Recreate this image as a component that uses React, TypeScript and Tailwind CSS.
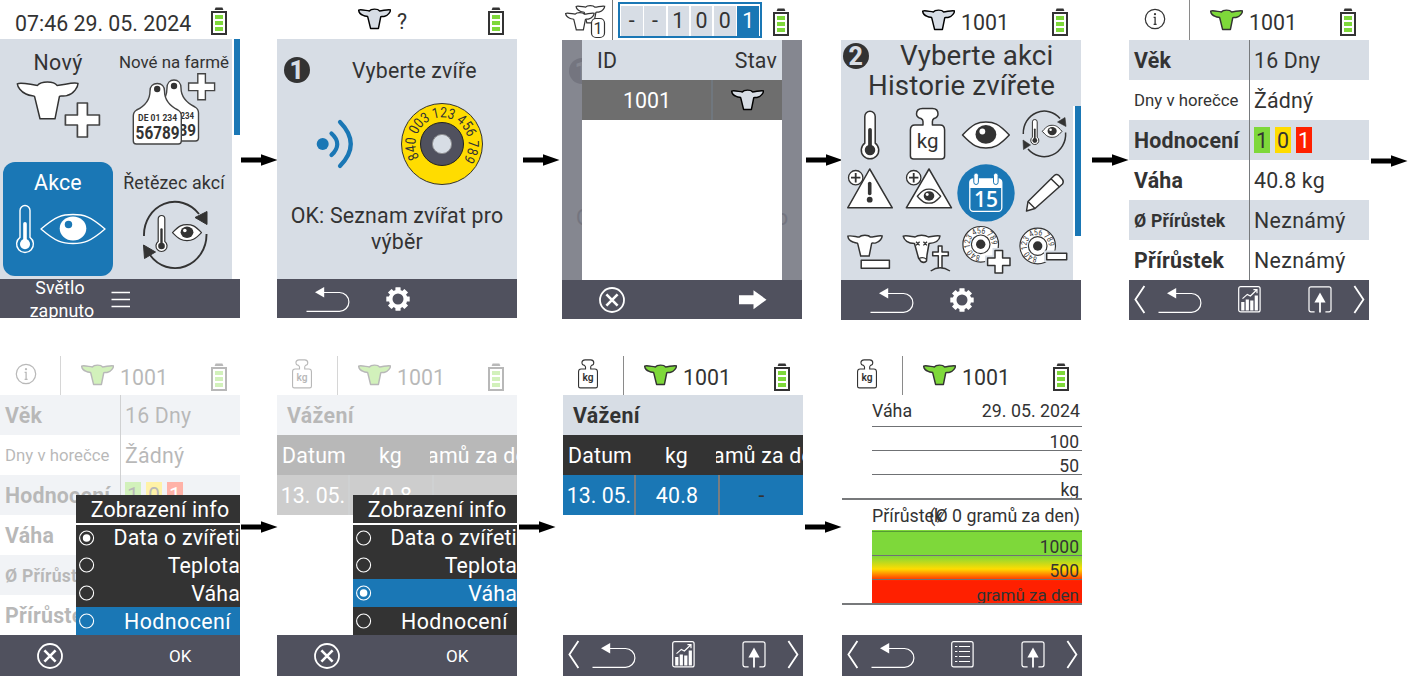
import React from 'react';

const INK = '#333333';
const SHADE = '#d7dde5';
const BLUE = '#1a77b5';
const GREEN = '#7ed83a';

/* ---------- shapes ---------- */

const COW_PATH =
  'M.3 3C4 .9 14 4 20.5 4.6C24 0 37 0 40 4.6C47 4.2 56 1 61 2.6C61 6 57 13 50 14.8C46 16 43 14.4 42.4 15.8L38 38H23L17.6 15.8C17 14.2 14 15.8 9 13.2C4 11 .5 6 .3 3Z';

function plusPath(x: number, y: number, s: number, t: number) {
  const a = (s - t) / 2;
  return `M${x + a} ${y}h${t}v${a}h${a}v${t}h${-a}v${a}h${-t}v${-a}h${-a}v${-t}h${a}z`;
}

function Cow({ fill = SHADE, stroke = INK }: { fill?: string; stroke?: string }) {
  return (
    <svg width="33" height="22" viewBox="-1 -1 63 42" className="block shrink-0">
      <path d={COW_PATH} fill={fill} stroke={stroke} strokeWidth="2.8" strokeLinejoin="round" />
    </svg>
  );
}

function Battery() {
  return (
    <svg width="16" height="28" viewBox="0 0 16 28" className="block shrink-0">
      <path d="M3.6 3L4.6 .4h6.800l1 2.600z" fill={INK} />
      <rect x="1" y="5" width="14" height="22" fill="#fff" stroke={INK} strokeWidth="2" />
      <path d="M4 8h8v4H4zM4 14h8v4H4zM4 20h8v4H4z" fill={GREEN} />
    </svg>
  );
}

function InfoIcon() {
  return (
    <svg width="22" height="22" viewBox="0 0 22 22" className="block">
      <circle cx="11" cy="11" r="9.7" fill="none" stroke={INK} strokeWidth="1.2" />
      <circle cx="11" cy="6.2" r="1.1" fill={INK} />
      <path d="M9.600 9.300h1.500v7M9.600 16.300h3" fill="none" stroke={INK} strokeWidth="1.300" />
    </svg>
  );
}

const WEIGHT_PATH =
  'M24 19V15.5Q24 13.5 22 12.5Q17.5 11.3 17.5 8Q17.5 2.5 23.5 2.5H33.5Q39 2.5 39 8Q39 11.3 35 12.5Q33.4 13.5 33.4 15.5V19H41Q45.6 19 45.6 24V50Q45.6 53 42.4 53H14.6Q11.4 53 11.4 50V24Q11.4 19 16 19Z';

function WeightSmall() {
  return (
    <svg width="20" height="30" viewBox="10.4 1 36.2 54" preserveAspectRatio="none" className="block">
      <path d={WEIGHT_PATH} fill="#fff" stroke={INK} strokeWidth="2" />
      <text x="28.7" y="41" textAnchor="middle" fontSize="18.5" fontWeight="600" letterSpacing="0" fill={INK}>
        kg
      </text>
    </svg>
  );
}

function BadgeNumber({ n, color = INK, hole = SHADE }: { n: string; color?: string; hole?: string }) {
  return (
    <svg width="26" height="26" viewBox="0 0 26 26" className="block shrink-0">
      <circle cx="13" cy="13" r="13" fill={color} />
      <text x="12.8" y="22" textAnchor="middle" fontWeight="800" fontSize="25" letterSpacing="0" fill={hole}>
        {n}
      </text>
    </svg>
  );
}

function Thermo({ x, y, h, w, line, fill, sw }: { x: number; y: number; h: number; w: number; line: string; fill: string; sw: number }) {
  const r = w * 0.84;
  const cy = y + h - r;
  const cx = x;
  const half = w / 2;
  const jy = cy - Math.sqrt(r * r - half * half);
  return (
    <g>
      <path
        d={`M${cx - half} ${jy}V${y + half}a${half} ${half} 0 0 1 ${w} 0V${jy}A${r} ${r} 0 1 1 ${cx - half} ${jy}Z`}
        fill={fill}
        stroke={line}
        strokeWidth={sw}
      />
      <circle cx={cx} cy={cy} r={r * 0.6} fill={line} />
      <path d={`M${cx} ${y + h * 0.39}V${cy}`} stroke={line} strokeWidth={w * 0.36} strokeLinecap="round" />
    </g>
  );
}

function Eye({ x1, x2, cy, h, r, line, fill, shine, sw }: { x1: number; x2: number; cy: number; h: number; r: number; line: string; fill: string; shine: string; sw: number }) {
  const cx = (x1 + x2) / 2;
  const q = (x2 - x1) / 4.2;
  return (
    <g>
      <path
        d={`M${x1} ${cy}C${x1 + q} ${cy - h * 0.45} ${cx - q * 0.7} ${cy - h / 2} ${cx} ${cy - h / 2}S${x2 - q} ${cy - h * 0.45} ${x2} ${cy}C${x2 - q} ${cy + h * 0.45} ${cx + q * 0.7} ${cy + h / 2} ${cx} ${cy + h / 2}S${x1 + q} ${cy + h * 0.45} ${x1} ${cy}Z`}
        fill={fill}
        stroke={line}
        strokeWidth={sw}
        strokeLinejoin="round"
      />
      <ellipse cx={cx} cy={cy - h * 0.02} rx={r} ry={r * 0.9} fill={line} />
      <circle cx={cx - r * 0.34} cy={cy - r * 0.34} r={r * 0.28} fill={shine} />
    </g>
  );
}

function RingText({ id, cx, cy, r, size, length, from, children }: { id: string; cx: number; cy: number; r: number; size: number; length: number; from: number; children: string }) {
  const a = (from * Math.PI) / 180;
  const sx = cx + r * Math.cos(a);
  const sy = cy + r * Math.sin(a);
  return (
    <>
      <path id={id} fill="none" d={`M${sx} ${sy}A${r} ${r} 0 0 1 ${2 * cx - sx} ${2 * cy - sy}A${r} ${r} 0 0 1 ${sx} ${sy}`} />
      <text fontSize={size} fill={INK} letterSpacing="0" textLength={length} lengthAdjust="spacingAndGlyphs">
        <textPath href={`#${id}`} textLength={length} lengthAdjust="spacingAndGlyphs">
          {children}
        </textPath>
      </text>
    </>
  );
}

/* ---------- footer icons ---------- */

function BackIcon() {
  return (
    <svg width="44" height="26" viewBox="0 0 44 26" className="block shrink-0">
      <path d="M16 5.500H33.500a9.300 9.300 0 0 1 0 18.800H.5" fill="none" stroke="#fff" strokeWidth="1.200" />
      <path d="M9 5.200L18.200 0V10.600z" fill="#fff" />
    </svg>
  );
}

function GearIcon() {
  return (
    <svg width="24" height="24" viewBox="-12 -12 24 24" className="block shrink-0">
      <circle r="7.400" fill="none" stroke="#fff" strokeWidth="3.800" />
      {[0, 45, 90, 135, 180, 225, 270, 315].map((a) => (
        <rect key={a} x="-2.600" y="-11.700" width="5.200" height="4.600" rx=".4" fill="#fff" transform={`rotate(${a})`} />
      ))}
    </svg>
  );
}

function CancelIcon() {
  return (
    <svg width="26" height="26" viewBox="-13 -13 26 26" className="block shrink-0">
      <circle r="12" fill="none" stroke="#fff" strokeWidth="1.800" />
      <path d="M-5.600-5.600L5.600 5.600M5.600-5.600L-5.600 5.600" stroke="#fff" strokeWidth="2.600" />
    </svg>
  );
}

function ChartIcon() {
  return (
    <svg width="23" height="27" viewBox="0 0 23 27" className="block shrink-0">
      <rect x=".7" y=".7" width="21.400" height="25.200" rx="2" fill="none" stroke="#fff" strokeWidth="1.200" />
      <path d="M3.200 16h3.200v8.400h-3.200zM7.700 13.600h3.200V24.400h-3.200zM12.200 14.600h3.200V24.400h-3.200zM16.700 9.600h3.200V24.400h-3.200z" fill="#fff" />
      <path d="M4.500 12.600L9.300 8.400L12.400 10L18.600 4M15.400 3.600H19V7.200" fill="none" stroke="#fff" strokeWidth="1.200" />
    </svg>
  );
}

function ListIcon() {
  return (
    <svg width="23" height="27" viewBox="0 0 23 27" className="block shrink-0">
      <rect x=".7" y=".7" width="21.400" height="25.200" rx="2" fill="none" stroke="#fff" strokeWidth="1.200" />
      {[5.5, 10.5, 15.5, 20.5].map((y) => (
        <path key={y} d={`M4 ${y}h2.400M8 ${y}h11`} stroke="#fff" strokeWidth="1.100" />
      ))}
    </svg>
  );
}

function ExportIcon() {
  return (
    <svg width="24" height="27" viewBox="0 0 24 27" className="block shrink-0">
      <path d="M6.600 25.800H3Q1 25.800 1 23.800V2.700Q1 .8 3 .8H21Q23 .8 23 2.700V23.800Q23 25.800 21 25.800H17.400" fill="none" stroke="#fff" strokeWidth="1.200" />
      <path d="M12 6.600L17.600 16.600H6.400z" fill="#fff" />
      <path d="M12 15V26.400" stroke="#fff" strokeWidth="1.800" />
    </svg>
  );
}

function Chevron({ right = false }: { right?: boolean }) {
  return (
    <svg width="12" height="29" viewBox="0 0 12 29" className="block shrink-0">
      <path d={right ? 'M1.400 1L10.400 14.500L1.400 28' : 'M10.400 1L1.400 14.500L10.400 28'} fill="none" stroke="#fff" strokeWidth="1.800" />
    </svg>
  );
}

/* ---------- layout parts ---------- */

function Arrow({ width, pad, top }: { width: string; pad: string; top: string }) {
  return (
    <div className={`shrink-0 ${width} ${pad} ${top}`}>
      <svg width="37" height="12" viewBox="0 0 37 12" className="block">
        <path d="M0 3.500H20V.2L36.500 6L20 11.800V8.500H0Z" fill="#000" />
      </svg>
    </div>
  );
}

function Header({ tall = false, icon, fill, label }: { tall?: boolean; icon?: React.ReactNode; fill: string; label: string }) {
  return (
    <div className={`flex items-start ${tall ? 'h-10 pt-px' : 'h-[39px]'}`}>
      <div className={`flex w-[61px] justify-center pr-[9px] ${tall ? '-mt-px h-10 pt-px' : 'h-[39px]'} ${icon ? 'border-r border-[#8a8a8a]' : ''}`}>{icon}</div>
      <div className="ml-5 pt-2">
        <Cow fill={fill} stroke={fill === SHADE ? '#000' : INK} />
      </div>
      <div className="ml-1.5 pt-px leading-[42px] tracking-normal">{label}</div>
      <div className="ml-auto mr-[13px] pt-[7px]">
        <Battery />
      </div>
    </div>
  );
}

const FOOT = 'flex items-start bg-[#50515e] text-white overflow-hidden';

function NavFooter({ middle, tall = false }: { middle: React.ReactNode; tall?: boolean }) {
  return (
    <div className={`${FOOT} ${tall ? 'h-[41px]' : 'h-10'}`}>
      <div className="pl-[5px] pt-[5px]"><Chevron /></div>
      <div className="pl-3 pt-2"><BackIcon /></div>
      <div className="pl-9 pt-1.5">{middle}</div>
      <div className="pl-[47px] pt-1.5"><ExportIcon /></div>
      <div className="pl-[21px] pt-[5px]"><Chevron right /></div>
    </div>
  );
}

function BackGearFooter({ height }: { height: string }) {
  return (
    <div className={`${FOOT} ${height}`}>
      <div className="pl-[29px] pt-2"><BackIcon /></div>
      <div className="pl-[36px] pt-2"><GearIcon /></div>
    </div>
  );
}

function InfoTable() {
  const row = 'flex h-10 items-start leading-[42px]';
  const label = 'w-[121px] h-10 pl-[5px] border-r border-[#777a7d] font-bold whitespace-nowrap';
  const val = 'pl-1';
  return (
    <div className="h-60">
      <div className={`${row} bg-[#d7dde5]`}><div className={label}>Věk</div><div className={val}>16 Dny</div></div>
      <div className={row}><div className="h-10 w-[121px] whitespace-nowrap border-r border-[#777a7d] pl-[5px] text-[16.8px] leading-[41px] tracking-normal">Dny v horečce</div><div className={val}>Žádný</div></div>
      <div className={`${row} bg-[#d7dde5]`}>
        <div className={label}>Hodnocení</div>
        <div className="flex gap-[5px] pl-1 pt-[7px] text-center leading-[27px]">
          <span className="h-[26px] w-4 bg-[#7ed83a]">1</span>
          <span className="h-[26px] w-4 bg-[#ffdc00]">0</span>
          <span className="h-[26px] w-4 bg-[#ff2000] text-white">1</span>
        </div>
      </div>
      <div className={row}><div className={label}>Váha</div><div className={val}>40.8 kg</div></div>
      <div className={`${row} bg-[#d7dde5]`}><div className="h-10 w-[121px] whitespace-nowrap border-r border-[#777a7d] pl-[5px] text-[17.6px] font-bold">Ø Přírůstek</div><div className={`${val} tracking-[.35px]`}>Neznámý</div></div>
      <div className={row}><div className={label}>Přírůstek</div><div className={`${val} tracking-[.35px]`}>Neznámý</div></div>
    </div>
  );
}

function WeighTable({ selected }: { selected: boolean }) {
  const cell = 'flex h-10 items-start justify-center overflow-hidden whitespace-nowrap leading-[42px]';
  const line = selected ? 'border-r-2 border-[#7a7d80]' : 'border-r-2 border-[#757a7d]';
  return (
    <div className="h-60">
      <div className="h-10 bg-[#d7dde5] pl-[10px] font-bold leading-[42px] tracking-[.35px]">Vážení</div>
      <div className="flex bg-[#333333] text-white">
        <div className={`${cell} w-[74px]`}>Datum</div>
        <div className={`${cell} w-[79px]`}>kg</div>
        <div className={`${cell} w-[87px]`}><span className="shrink-0">gramů za den</span></div>
      </div>
      <div className={`flex text-white ${selected ? 'bg-[#1a77b5]' : 'bg-[#6e6e6e]'}`}>
        <div className={`${cell} w-[73px] pl-px tracking-normal ${line}`}>13. 05.</div>
        <div className={`${cell} w-[84px] ${line}`}>40.8</div>
        <div className={`${cell} w-[83px] text-[#333333]`}>{selected ? '-' : ''}</div>
      </div>
    </div>
  );
}

function Menu({ checked, active }: { checked: string; active: string }) {
  return (
    <div className="absolute bottom-[41px] right-0 w-[164px] overflow-hidden bg-[#333333] text-white">
      <div className="h-[30px] border-b-2 border-white pl-1 text-center leading-[29px]">Zobrazení info</div>
      {['Data o zvířeti', 'Teplota', 'Váha', 'Hodnocení'].map((name, i) => (
        <div
          key={name}
          className={`flex items-center justify-between whitespace-nowrap pl-[3px] ${i === 0 ? 'h-[26px] pb-px' : 'h-7'} ${name === active ? 'bg-[#1a77b5]' : ''} ${name === 'Hodnocení' ? 'pr-[9px] tracking-[.45px]' : ''}`}
        >
          <svg width="16" height="16" viewBox="0 0 16 16" className="block shrink-0">
            <circle cx="7.600" cy="8" r="7" fill="none" stroke="#fff" strokeWidth="1.100" />
            {name === checked && <circle cx="7.600" cy="8" r="3.800" fill="#fff" />}
          </svg>
          <span className={i === 0 ? '' : 'pt-px'}>{name}</span>
        </div>
      ))}
    </div>
  );
}

/* ---------- screens ---------- */

function HomeScreen() {
  return (
    <div className="w-60 shrink-0">
      <div className="flex h-[39px] items-start pl-[15px]">
        <div className="whitespace-nowrap leading-[47px] tracking-normal">07:46 29. 05. 2024</div>
        <div className="ml-auto mr-[13px] pt-[7px]"><Battery /></div>
      </div>
      <div className="flex h-60 justify-between">
        <div className="grid w-[232px] grid-cols-2 grid-rows-2 bg-[#d7dde5] text-center">
          <div className="pt-[11px]">
            <div className="leading-[26px] tracking-[.4px]">Nový</div>
            <svg width="116" height="68" viewBox="0 76 116 68" className="block">
              <path d={COW_PATH} transform="translate(17 80.8)" fill="#fff" stroke={INK} strokeWidth="1.500" strokeLinejoin="round" />
              <path d={plusPath(65.4, 103, 34, 10)} fill="#fff" stroke="#444" strokeWidth="1.700" strokeLinejoin="round" />
            </svg>
          </div>
          <div className="whitespace-nowrap pt-[11px]">
            <div className="text-[16.9px] leading-[25px] tracking-normal">Nové na farmě</div>
            <svg width="116" height="75" viewBox="116 72 116 75" className="-mt-[3px] block">
              <path d="M167 88C167 83 170 80 174 80S181 83 181 88C181 97 187 103 195 107Q198.500 109 198.500 113V138Q198.500 141 195.500 141H160V104C165 100 167 94 167 88Z" fill="#fff" stroke="#444" strokeWidth="1.400" />
              <circle cx="174" cy="86" r="3.200" fill={INK} />
              <text x="180.500" y="118.600" fontSize="9" fontWeight="700" letterSpacing="0" textLength="13.500" lengthAdjust="spacingAndGlyphs" fill={INK}>234</text>
              <text x="178.500" y="136" fontSize="17" fontWeight="700" letterSpacing="0" textLength="17.500" lengthAdjust="spacingAndGlyphs" fill={INK}>89</text>
              <path d="M150 91C150 86.500 153 83.500 157.300 83.500S164.500 86.500 164.500 91C164.500 100 170 106 178 110Q181.300 112 181.300 116V141Q181.300 144 178.300 144H136.300Q133.300 144 133.300 141V116Q133.300 112 136.600 110C145 106 150 100 150 91Z" fill="#fff" stroke="#444" strokeWidth="1.400" />
              <circle cx="157.200" cy="89" r="3.200" fill={INK} />
              <text x="157.600" y="121" fontSize="9.500" fontWeight="700" letterSpacing="0" textAnchor="middle" textLength="39" lengthAdjust="spacingAndGlyphs" fill={INK}>DE 01 234</text>
              <text x="157.600" y="138.700" fontSize="18" fontWeight="700" letterSpacing="0" textAnchor="middle" textLength="44" lengthAdjust="spacingAndGlyphs" fill={INK}>56789</text>
              <path d={plusPath(188.6, 73.8, 26, 7.6)} fill="#fff" stroke="#444" strokeWidth="1.400" />
            </svg>
          </div>
          <div className="m-[3px] rounded-xl bg-[#1a77b5] pt-2 text-white">
            <div className="leading-[26px]">Akce</div>
            <svg width="110" height="58" viewBox="3 200 110 58" className="mt-1 block">
              <Thermo x={25} y={205.500} h={47} w={10} line="#fff" fill={BLUE} sw={1.400} />
              <Eye x1={41} x2={105} cy={229} h={29} r={13.3} line="#fff" fill={BLUE} shine={BLUE} sw={1.400} />
            </svg>
          </div>
          <div className="whitespace-nowrap pt-[11px]">
            <div className="text-[17.8px] leading-[25px] tracking-[.15px]">Řetězec akcí</div>
            <svg width="116" height="76" viewBox="116 196 116 76" className="mt-0.5 block">
              <path d="M144 235A31 33 0 0 1 199 213M206.500 233A31.500 33.500 0 0 1 150 254" fill="none" stroke={INK} strokeWidth="1.900" />
              <path d="M207 223.500L195 216.500L207 210.500ZM143.500 244L155.500 251L144.500 257.500Z" fill={INK} stroke={INK} />
              <Thermo x={161.500} y={214.500} h={36} w={6.600} line={INK} fill="#fff" sw={1.200} />
              <Eye x1={172.500} x2={201.500} cy={231.600} h={16} r={6.400} line={INK} fill="#fff" shine="#fff" sw={1.200} />
            </svg>
          </div>
        </div>
        <div className="h-24 w-1.5 bg-[#1a77b5]" />
      </div>
      <div className={`${FOOT} h-[39px]`}>
        <div className="-mt-[3px] ml-[26px] w-[72px] text-center text-[17.8px] leading-[23px] tracking-[.1px]">
          <div className="pr-1">Světlo</div>
          <div>zapnuto</div>
        </div>
        <svg width="20" height="18" viewBox="0 0 20 18" className="ml-[13px] mt-3 block">
          <path d="M.5 1.500h18.500M.5 8.500h18.500M.5 15.500h18.500" stroke="#fff" strokeWidth="1.600" />
        </svg>
      </div>
    </div>
  );
}

function PickAnimalScreen() {
  return (
    <div className="w-60 shrink-0">
      <Header fill={SHADE} label="?" />
      <div className="h-60 bg-[#d7dde5] pt-[18px]">
        <div className="flex items-center pl-[7px]">
          <BadgeNumber n="1" />
          <div className="pl-[42px] leading-[25px] tracking-[.15px]">Vyberte zvíře</div>
        </div>
        <svg width="240" height="86" viewBox="277 101 240 86" className="mt-[18px] block">
          <circle cx="322.700" cy="144" r="6" fill={BLUE} />
          <path d="M331.500 133.500Q343 144 331.500 155" fill="none" stroke={BLUE} strokeWidth="4.200" strokeLinecap="round" />
          <path d="M340 122Q361.500 144 340 166" fill="none" stroke={BLUE} strokeWidth="4.200" strokeLinecap="round" />
          <circle cx="442" cy="144" r="40.500" fill="#ffdc00" stroke={INK} strokeWidth="1" />
          <circle cx="442" cy="144" r="21.500" fill="#50515e" stroke="#222" strokeWidth="1" />
          <circle cx="442" cy="144" r="9.600" fill={SHADE} stroke="#8b8c90" strokeWidth="1" />
          <RingText id="ring-large" cx={442} cy={144} r={26.5} size={14.5} length={114} from={149}>840 003 123 456 789</RingText>
        </svg>
        <div className="mt-4 text-center leading-[26px]">OK: Seznam zvířat pro výběr</div>
      </div>
      <BackGearFooter height="h-[39px]" />
    </div>
  );
}

function SearchScreen() {
  return (
    <div className="w-60 shrink-0">
      <div className="flex h-10 items-start">
        <div className="h-10 w-[51px] border-r border-[#777777] pl-[3px] pt-1">
          <svg width="42" height="35" viewBox="565 4 42 35" className="block">
            <path d={COW_PATH} transform="translate(576 5) scale(.47)" fill="#fff" stroke={INK} strokeWidth="2.600" />
            <path d={COW_PATH} transform="translate(565.500 12) scale(.47)" fill="#fff" stroke={INK} strokeWidth="2.600" />
            <rect x="591.500" y="18.500" width="13" height="19" rx="4.500" fill="#fff" stroke={INK} strokeWidth="1.200" />
            <text x="598" y="34" fontSize="16" textAnchor="middle" letterSpacing="0" fill={INK}>1</text>
          </svg>
        </div>
        <div className="ml-[5px] mt-[2px] flex h-9 w-[144px] justify-between border-2 border-[#1a77b5] p-px text-center leading-[29px]">
          {['-', '-', '1', '0', '0', '1'].map((c, i) => (
            <span key={i} className={`mt-px h-[30px] w-[21.5px] ${i === 5 ? 'bg-[#1a77b5] text-white' : 'bg-[#d7dde5]'}`}>{c}</span>
          ))}
        </div>
        <div className="ml-auto mr-[13px] pt-2"><Battery /></div>
      </div>
      <div className="flex h-60 bg-[#858790]">
        <div className="w-5 overflow-hidden pt-[18px]">
          <div className="ml-[7px]"><BadgeNumber n="1" color="#74757f" hole="#858790" /></div>
          <div className="ml-[14px] mt-[121px] leading-[26px] text-[#74757f]">O</div>
        </div>
        <div className="w-[200px] bg-white">
          <div className="flex h-10 justify-between bg-[#d7dde5] pl-[15px] pr-[5px] leading-[42px]"><span>ID</span><span>Stav</span></div>
          <div className="flex h-10 items-center bg-[#6e6e6e] text-white">
            <div className="h-10 w-[131px] border-r-2 border-[#70777e] pl-px text-center leading-[42px] tracking-normal">1001</div>
            <div className="flex flex-1 justify-center"><Cow stroke="#000" /></div>
          </div>
        </div>
        <div className="w-5 overflow-hidden pt-[165px]">
          <div className="-ml-[6px] leading-[26px] text-[#74757f]">o</div>
        </div>
      </div>
      <div className={`${FOOT} h-[39px]`}>
        <div className="pl-[37px] pt-[7px]"><CancelIcon /></div>
        <svg width="28" height="20" viewBox="0 0 28 20" className="ml-[114px] mt-[10px] block">
          <path d="M0 5.200H14.500V.2L27.500 9.700L14.500 19.200V14.200H0Z" fill="#fff" />
        </svg>
      </div>
    </div>
  );
}

const S = { fill: '#fff', stroke: INK, strokeWidth: 1.5, strokeLinejoin: 'round' as const };

function IconCell({ children }: { children: React.ReactNode }) {
  return (
    <svg width="58" height="58" viewBox="0 0 58 58" className="block">
      {children}
    </svg>
  );
}

function PlusDot() {
  return (
    <g>
      <circle cx="14.700" cy="13.700" r="7.200" fill="#fff" stroke={INK} strokeWidth="1.300" />
      <path d="M10 13.700h9.400M14.700 9v9.400" stroke={INK} strokeWidth="1.800" />
    </g>
  );
}

function SmallRing({ id, cx, cy }: { id: string; cx: number; cy: number }) {
  return (
    <g>
      <circle cx={cx} cy={cy} r="17.800" fill="#fff" stroke={INK} strokeWidth="1.200" />
      <circle cx={cx} cy={cy} r="9.300" fill="#fff" stroke={INK} strokeWidth="1.200" />
      <circle cx={cx} cy={cy} r="4.700" fill={INK} />
      <RingText id={id} cx={cx} cy={cy} r={10.9} size={8.4} length={51} from={92}>840 123 456 789</RingText>
    </g>
  );
}

function ActionScreen() {
  return (
    <div className="w-60 shrink-0">
      <Header tall fill={SHADE} label="1001" />
      <div className="h-60 bg-[#d7dde5]">
        <div className="flex h-[66px] items-start pl-[2px] text-[27.7px] leading-[30px] tracking-[.15px]">
          <div className="pt-[3px]"><BadgeNumber n="2" /></div>
          <div className="-ml-px w-[195px] whitespace-nowrap pt-px">
            <div className="pl-[32px]">Vyberte akci</div>
            <div>Historie zvířete</div>
          </div>
        </div>
        <div className="flex h-[174px] bg-white">
          <div className="grid w-[232px] grid-cols-4 bg-[#d7dde5]">
            <IconCell><Thermo x={29} y={5.2} h={47.600} w={10.400} line={INK} fill="#fff" sw={1.500} /></IconCell>
            <IconCell>
              <path d={WEIGHT_PATH} {...S} />
              <text x="28.700" y="41.500" fontSize="20.500" textAnchor="middle" letterSpacing="0" fill={INK}>kg</text>
            </IconCell>
            <IconCell><Eye x1={5.500} x2={52.300} cy={29} h={26} r={10.400} line={INK} fill="#fff" shine="#fff" sw={1.500} /></IconCell>
            <IconCell>
              <path d="M8.300 28A21 22 0 0 1 45 12.500M50.600 26.500A21.500 22.500 0 0 1 13 43" fill="none" stroke={INK} strokeWidth="1.500" />
              <path d="M51 20.500L42.500 16L50 11.500ZM8 34L15.500 39L8.500 43.500Z" fill={INK} stroke={INK} strokeWidth=".6" />
              <Thermo x={19.800} y={13.500} h={25} w={4.800} line={INK} fill="#fff" sw={1} />
              <Eye x1={27.300} x2={47} cy={25.300} h={12} r={4.600} line={INK} fill="#fff" shine="#fff" sw={1} />
            </IconCell>
            <IconCell>
              <path d="M28.700 5L51.300 43.800H6.700Z" {...S} />
              <PlusDot />
              <path d="M28.700 19.500V29.500" stroke={INK} strokeWidth="3.600" strokeLinecap="round" />
              <circle cx="28.700" cy="35.700" r="2.900" fill={INK} />
            </IconCell>
            <IconCell>
              <path d="M30 5L52.500 43.800H7.300Z" {...S} />
              <PlusDot />
              <Eye x1={18.300} x2={41.700} cy={32.200} h={14} r={5.300} line={INK} fill="#fff" shine="#fff" sw={1.300} />
            </IconCell>
            <IconCell>
              <circle cx="29" cy="28.900" r="28.700" fill={BLUE} />
              <rect x="12.800" y="15" width="32" height="32.300" rx="3.500" fill={BLUE} stroke="#fff" strokeWidth="1.300" />
              <path d="M12.800 24V18Q12.800 15 16 15H42Q44.800 15 44.800 18V24Z" fill="#fff" />
              <rect x="16.800" y="9" width="4.600" height="11.500" rx="2.300" fill="#fff" stroke={BLUE} strokeWidth="1" />
              <rect x="36.500" y="9" width="4.600" height="11.500" rx="2.300" fill="#fff" stroke={BLUE} strokeWidth="1" />
              <text x="29" y="43" fontFamily="Open Sans, Noto Sans, sans-serif" fontWeight="600" fontSize="21" textAnchor="middle" letterSpacing="0" fill="#fff">15</text>
            </IconCell>
            <IconCell>
              <path d="M11.500 47L13 37.500L39.300 11.500Q41.500 9.500 44 11.500L47.500 15.500Q49 18 47.500 20L20 44.500Z" {...S} />
              <path d="M36 14.700L44.500 23M13 37.500L20 44.500" fill="none" stroke={INK} strokeWidth="1.400" />
            </IconCell>
            <IconCell>
              <path d={COW_PATH} transform="translate(6.700 12.500) scale(.565)" fill="#fff" stroke={INK} strokeWidth="2.600" />
              <rect x="20.200" y="38.300" width="28.200" height="8" {...S} />
            </IconCell>
            <IconCell>
              <path d="M4.200 14.200C7 13 12 14.500 16 15C19 12.500 26 12.500 29.500 15C33 14.500 38 13 41 14C40.500 18 37 21 30 21.500L28 33L27.500 39Q25.500 41.500 22 39.500L19.500 36L15.500 21.500C9 21.500 5 18 4.200 14.200Z" {...S} />
              <path d="M17 19.800l3.600 3.600M20.600 19.800L17 23.400M24.400 19.800l3.600 3.600M28 19.800l-3.600 3.600" stroke={INK} strokeWidth="1.300" />
              <path d="M20 36.500Q24 34.500 27.500 37.200" fill="none" stroke={INK} strokeWidth="1.200" />
              <path d="M39.300 46V33.700H33.700V30H39.300V24H43V30H49.300V33.700H43V46" {...S} />
              <path d="M31.700 49Q41 42.500 51 49" fill={SHADE} stroke={INK} strokeWidth="1.400" />
            </IconCell>
            <IconCell>
              <SmallRing id="ring-plus" cx={23.700} cy={22.300} />
              <path d={plusPath(30.600, 28.600, 22.400, 7.600)} fill="#fff" stroke={SHADE} strokeWidth="5" />
              <path d={plusPath(30.600, 28.600, 22.400, 7.600)} {...S} />
            </IconCell>
            <IconCell>
              <SmallRing id="ring-minus" cx={22.700} cy={24} />
              <rect x="29" y="28.500" width="26" height="11.500" fill={SHADE} />
              <rect x="31.700" y="31.200" width="20" height="6.500" {...S} />
            </IconCell>
          </div>
          <div className="ml-[2px] h-[130px] w-1.5 bg-[#1a77b5]" />
        </div>
      </div>
      <BackGearFooter height="h-10" />
    </div>
  );
}

function InfoScreen() {
  return (
    <div className="w-60 shrink-0">
      <Header tall fill={GREEN} label="1001" icon={<div className="pt-[7px]"><InfoIcon /></div>} />
      <InfoTable />
      <NavFooter middle={<ChartIcon />} />
    </div>
  );
}

function CancelOkFooter() {
  return (
    <div className={`${FOOT} h-[41px]`}>
      <div className="pl-[37px] pt-2"><CancelIcon /></div>
      <div className="ml-[106px] text-[17px] leading-[42px] tracking-normal">OK</div>
    </div>
  );
}

function InfoMenuScreen() {
  return (
    <div className="relative w-60 shrink-0">
      <div className="opacity-[.34]">
        <Header fill={GREEN} label="1001" icon={<div className="pt-[7px]"><InfoIcon /></div>} />
        <InfoTable />
      </div>
      <Menu checked="Data o zvířeti" active="Hodnocení" />
      <CancelOkFooter />
    </div>
  );
}

const weightMark = <div className="pr-px pt-[3px]"><WeightSmall /></div>;

function WeighMenuScreen() {
  return (
    <div className="relative w-60 shrink-0">
      <div className="opacity-[.34]">
        <Header fill={GREEN} label="1001" icon={weightMark} />
        <WeighTable selected={false} />
      </div>
      <Menu checked="Váha" active="Váha" />
      <CancelOkFooter />
    </div>
  );
}

function WeighScreen() {
  return (
    <div className="w-60 shrink-0">
      <Header fill={GREEN} label="1001" icon={weightMark} />
      <WeighTable selected />
      <NavFooter tall middle={<ChartIcon />} />
    </div>
  );
}

function ChartScreen() {
  const band = 'h-6 overflow-hidden border-b border-[#6f7174] pr-[3px] text-right leading-[31px]';
  return (
    <div className="w-60 shrink-0">
      <Header fill={GREEN} label="1001" icon={weightMark} />
      <div className="h-60 text-[17.5px] tracking-normal">
        <div className="ml-[30px] flex h-8 justify-between border-b border-[#6f7174] pr-[2px] text-[17.8px] leading-8"><span>Váha</span><span>29. 05. 2024</span></div>
        <div className={`ml-[30px] ${band}`}>100</div>
        <div className={`ml-[30px] ${band}`}>50</div>
        <div className="h-[25px] overflow-hidden border-b-2 border-[#77797b] pr-[3px] text-right leading-[31px]">kg</div>
        <div className="relative ml-[30px] h-[30px] text-[17.8px] leading-[32px]">
          <span className="whitespace-nowrap">Přírůstek</span>
          <span className="absolute right-[2px] top-0 whitespace-nowrap">(Ø 0 gramů za den)</span>
        </div>
        <div className="border-b-2 border-[#77797b] pl-[30px]">
          <div className="h-[73px] bg-[linear-gradient(to_bottom,#7ed83a_0px,#7ed83a_26px,#ffdc00_39px,#ff2000_51px,#ff2000_73px)]">
            <div className="h-[2px] border-b border-[#559a35]" />
            <div className={band}>1000</div>
            <div className={band}>500</div>
            <div className="h-[23px] overflow-hidden pr-[3px] text-right text-[17px] leading-[31px]">gramů za den</div>
          </div>
        </div>
      </div>
      <NavFooter tall middle={<ListIcon />} />
    </div>
  );
}

export default function App() {
  return (
    <div className="h-[676px] w-[1411px] overflow-hidden bg-white font-['Roboto',sans-serif] text-[21.33px] tracking-[.2px] text-[#333333]">
      <div className="flex h-[356px] items-start">
        <HomeScreen />
        <Arrow width="w-[37px]" pad="pl-px" top="pt-[154px]" />
        <PickAnimalScreen />
        <Arrow width="w-[45px]" pad="pl-1.5" top="pt-[154px]" />
        <SearchScreen />
        <Arrow width="w-[39px]" pad="pl-1" top="pt-[154px]" />
        <ActionScreen />
        <Arrow width="w-[48px]" pad="pl-[11px]" top="pt-[154px]" />
        <InfoScreen />
        <Arrow width="w-[42px]" pad="pl-[2px]" top="pt-[155px]" />
      </div>
      <div className="flex h-80 items-start">
        <InfoMenuScreen />
        <Arrow width="w-[37px]" pad="pl-px" top="pt-[165px]" />
        <WeighMenuScreen />
        <Arrow width="w-[46px]" pad="pl-[2px]" top="pt-[165px]" />
        <WeighScreen />
        <Arrow width="w-[39px]" pad="pl-[2px]" top="pt-[165px]" />
        <ChartScreen />
      </div>
    </div>
  );
}
